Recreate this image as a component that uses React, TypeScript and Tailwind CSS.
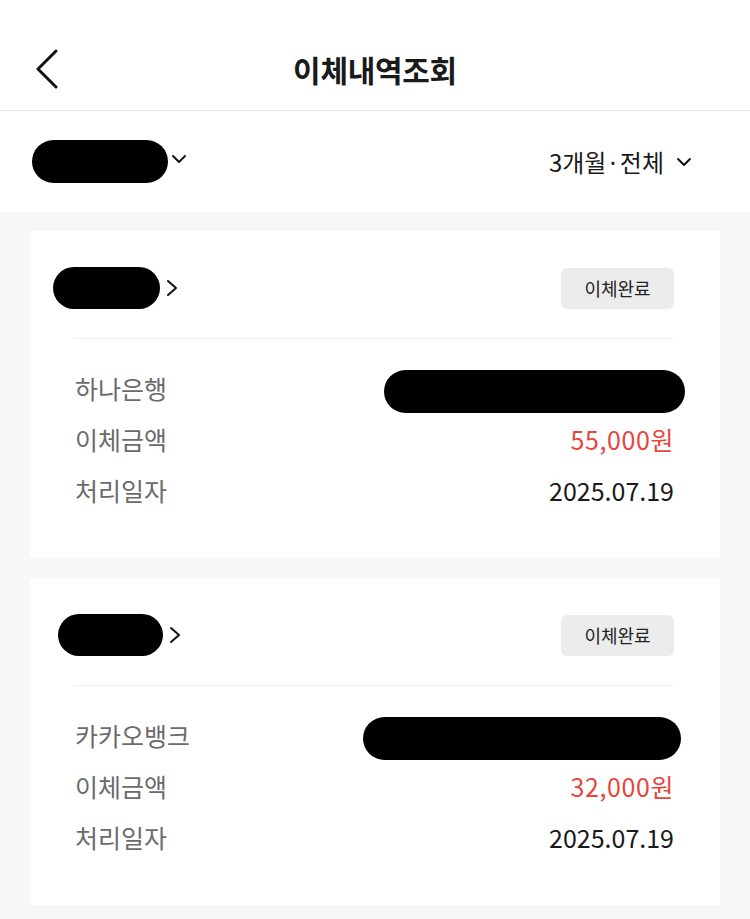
import React from "react";

const font = { fontFamily: '"Noto Sans CJK KR", "Noto Sans", sans-serif' };

function Chevron({ className }: { className?: string }) {
  return (
    <svg viewBox="0 0 16 10" className={className} fill="none" stroke="#111" strokeWidth="2" strokeLinecap="round" strokeLinejoin="round">
      <path d="M2 2l6 6 6-6" />
    </svg>
  );
}

function Card({ bank, amount, pillW, pillMl, bankPill }: { bank: string; amount: string; pillW: string; pillMl: string; bankPill: string }) {
  return (
    <div className="bg-white mx-[30px] pt-[36px] pb-[42px]">
      <div className="flex items-center justify-between pr-[46px] h-[42px]">
        <div className={`flex items-center ${pillMl}`}>
          <div className={`h-[42px] ${pillW} bg-black rounded-full`} />
          <svg viewBox="0 0 12 18" className="w-[12px] h-[18px] ml-[6px]" fill="none" stroke="#111" strokeWidth="2" strokeLinecap="round" strokeLinejoin="round">
            <path d="M2 2l8 7-8 7" />
          </svg>
        </div>
        <div className="h-[41px] w-[113px] bg-[#ececec] rounded-[6px] flex items-center justify-center text-[18px] text-[#222]">
          이체완료
        </div>
      </div>
      <div className="ml-[45px] mr-[46px] mt-[29px] border-t border-[#eeeeee]" />
      <div className="ml-[45px] mr-[46px] mt-[24px] flex flex-col text-[25px]">
        <div className="h-[51px] flex items-center justify-between">
          <span className="text-[#6b6b6b]">{bank}</span>
          <div className={`h-[43px] bg-black rounded-full mt-[6px] ${bankPill}`} />
        </div>
        <div className="h-[51px] flex items-center justify-between">
          <span className="text-[#6b6b6b]">이체금액</span>
          <span className="text-[#e8453c] tracking-[0.6px]">{amount}</span>
        </div>
        <div className="h-[51px] flex items-center justify-between">
          <span className="text-[#6b6b6b]">처리일자</span>
          <span className="text-[#1a1a1a]">2025.07.19</span>
        </div>
      </div>
    </div>
  );
}

export default function App() {
  return (
    <div className="w-[750px] h-[919px] bg-[#f7f7f7] overflow-hidden" style={font}>
      <div className="bg-white h-[111px] border-b border-[#e3e3e3] relative flex items-center justify-center pt-[28px]">
        <svg viewBox="0 0 24 40" className="absolute left-[34px] top-[49px] w-[24px] h-[40px]" fill="none" stroke="#111" strokeWidth="3" strokeLinecap="round" strokeLinejoin="round">
          <path d="M22 2L4 20l18 18" />
        </svg>
        <h1 className="text-[30px] font-bold text-[#1a1a1a] tracking-[-0.3px]">이체내역조회</h1>
      </div>
      <div className="bg-white h-[101px] flex items-center justify-between pl-[32px] pr-[58px]">
        <div className="flex items-center">
          <div className="h-[43px] w-[136px] bg-black rounded-full" />
          <Chevron className="w-[16px] h-[10px] ml-[3px] -mt-[6px]" />
        </div>
        <div className="flex items-center text-[24px] text-[#1a1a1a]">
          <span>3개월·전체</span>
          <Chevron className="w-[16px] h-[10px] ml-[12px]" />
        </div>
      </div>
      <div className="pt-[19px] flex flex-col gap-[20px]">
        <Card bank="하나은행" amount="55,000원" pillW="w-[107px]" pillMl="ml-[23px]" bankPill="w-[301px] -mr-[11px]" />
        <Card bank="카카오뱅크" amount="32,000원" pillW="w-[105px]" pillMl="ml-[28px]" bankPill="w-[318px] -mr-[7px]" />
      </div>
    </div>
  );
}
